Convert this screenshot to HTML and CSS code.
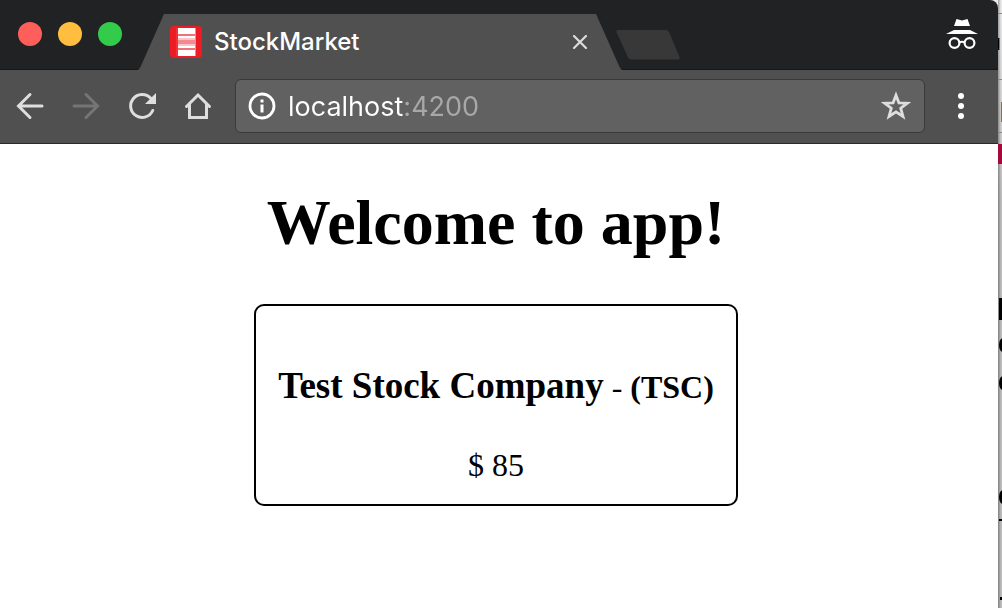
FILE: index.html
```html
<!DOCTYPE html>
<html lang="en">
<head>
<meta charset="utf-8">
<title>StockMarket</title>
<link rel="stylesheet" href="styles.css">
</head>
<body>
<div class="desktop">
  <div class="window">
    <header class="tabstrip">
      <div class="lights">
        <button class="light light-close" aria-label="Close window"></button>
        <button class="light light-min" aria-label="Minimize window"></button>
        <button class="light light-max" aria-label="Zoom window"></button>
      </div>
      <div class="tab">
        <svg class="favicon" viewBox="0 0 32 32" aria-hidden="true">
          <rect width="32" height="32" rx="4" fill="#ed1c24"/>
          <rect x="6" y="2" width="2" height="28" fill="#f0323a"/>
          <rect x="8" y="2" width="18" height="28" fill="#f4888c"/>
          <path d="M8 2h17v6H8zM8 10h17v2H8zM8 20h17v2H8zM8 24h17v6H8z" fill="#fff"/>
          <path d="M8 8h17v2H8zM8 22h17v2H8z" fill="#f37076"/>
          <path d="M8 12h17v2H8zM8 18h17v2H8z" fill="#fbc4c6"/>
        </svg>
        <span class="tab-title">StockMarket</span>
        <button class="tab-close" aria-label="Close tab">
          <svg width="14" height="14" viewBox="0 0 14 14"><path d="M1 1l12 12M13 1L1 13" stroke="#dcdcdc" stroke-width="2.2" stroke-linecap="round"/></svg>
        </button>
      </div>
      <button class="new-tab" aria-label="New tab">
        <svg width="64" height="30" viewBox="0 0 64 30"><path d="M2 0H50q2 0 3 2L63.500 27q.5 2.500-1.500 2.500H15q-2 0-3-2L.5 2Q0 0 2 0z" fill="#383838"/></svg>
      </button>
      <svg class="incognito" width="32" height="30" viewBox="0 0 32 30" role="img" aria-label="Incognito">
        <path d="M10.500 0l5.500 1.500L21.500 0 24 7H8z" fill="#fff"/>
        <path d="M8 11h16l8 4H0z" fill="#fff"/>
        <g fill="none" stroke="#fff" stroke-width="2.200"><circle cx="8.500" cy="24" r="4.900"/><circle cx="23.500" cy="24" r="4.900"/><path d="M13 23.500q3-1.500 6 0"/></g>
      </svg>
    </header>
    <nav class="toolbar">
      <button class="tool" aria-label="Back">
        <svg width="28" height="28" viewBox="0 0 28 28"><path d="M26 14H3M14 2.500L2.500 14 14 25.500" class="stroke"/></svg>
      </button>
      <button class="tool" aria-label="Forward" disabled>
        <svg width="28" height="28" viewBox="0 0 28 28"><path d="M2 14h23M14 2.500L25.500 14 14 25.500" class="stroke stroke-off"/></svg>
      </button>
      <button class="tool" aria-label="Reload">
        <svg width="28" height="28" viewBox="0 0 28 28"><path d="M24.700 18.500A11.500 11.500 0 1 1 22.500 6" class="stroke"/><path d="M28 1v11H17z" fill="#dedede"/></svg>
      </button>
      <button class="tool" aria-label="Home">
        <svg width="28" height="28" viewBox="0 0 28 28"><path d="M2.500 14.500L14 3l11.500 11.500M5.500 12.500V25.500H22.500V12.500" class="stroke"/></svg>
      </button>
      <div class="omnibox">
        <button class="omni-btn" aria-label="Site information">
          <svg width="28" height="28" viewBox="0 0 28 28"><circle cx="14" cy="14" r="12" fill="none" stroke="#fff" stroke-width="2.800"/><path d="M12.500 7.500h3v3h-3zM12.500 12.500h3v8h-3z" fill="#fff"/></svg>
        </button>
        <input class="url" type="text" value="localhost:4200" aria-label="Address" spellcheck="false">
        <button class="omni-btn" aria-label="Bookmark this page">
          <svg width="30" height="30" viewBox="0 0 30 30"><path d="M15 4.200L17.900 11.800 26.300 12.200 19.700 17.200 22 25.500 15 20.900 8 25.500 10.300 17.200 3.700 12.200 12.100 11.800z" fill="none" stroke="#dedede" stroke-width="2.800"/></svg>
        </button>
      </div>
      <button class="menu" aria-label="Menu">
        <svg width="6" height="26" viewBox="0 0 6 26"><g fill="#fff"><circle cx="3" cy="3" r="3"/><circle cx="3" cy="13" r="3"/><circle cx="3" cy="23" r="3"/></g></svg>
      </button>
    </nav>
    <main class="page">
      <h1 class="welcome">Welcome to app!</h1>
      <section class="stock">
        <div class="stock-name"><h3 class="company">Test Stock Company</h3> - <b>(TSC)</b></div>
        <div class="price">$ 85</div>
      </section>
    </main>
  </div>
  <div class="behind">
    <svg width="4" height="608" viewBox="0 0 4 608" aria-hidden="true">
      <path d="M0 13.500h4M0 79.500h4M0 132.500h4" stroke="#8b8b8b"/>
      <path d="M0 38h1v12H0z" fill="#000"/><path d="M1 38h1v12H1z" fill="#4a80b8"/>
      <path d="M3 102h1v20H3z" fill="#80715f"/>
      <path d="M0 144h4v20H0z" fill="#a5093c"/>
      <path d="M1 298h3v22H1zM1 519h3v2H1zM2 597h2v3H2z" fill="#000"/>
      <g fill="#000"><ellipse cx="5" cy="345" rx="4" ry="7"/><ellipse cx="5" cy="383" rx="4" ry="7"/><ellipse cx="5" cy="497" rx="4" ry="7"/></g>
    </svg>
  </div>
</div>
</body>
</html>
```
FILE: styles.css
```css
* { box-sizing: border-box; }

body { margin: 0; }

button {
  display: grid;
  place-items: center;
  margin: 0;
  padding: 0;
  border: 0;
  background: none;
}

.desktop {
  display: grid;
  grid-template-columns: 1fr 4px;
  min-height: 100vh;
  background: linear-gradient(#ececec, #bdbdbd 200px);
}

.window {
  display: flex;
  flex-direction: column;
  border-top-right-radius: 8px;
  overflow: hidden;
  background: #fff;
}

.behind {
  overflow: hidden;
  background: linear-gradient(90deg, #0005, #0000 3px);
}

.behind svg { display: block; }

.tabstrip {
  display: flex;
  height: 70px;
  background: #202224;
  box-shadow: inset 0 -1px #161718;
}

.lights {
  display: flex;
  gap: 16px;
  width: 138px;
  padding: 22px 0 0 18px;
}

.light {
  width: 24px;
  height: 24px;
  border-radius: 50%;
}

.light-close { background: #ff5f5a; }
.light-min { background: #ffbe3f; }
.light-max { background: #33cb4a; }

.tab {
  display: flex;
  align-items: center;
  gap: 12px;
  flex: 0 1 484px;
  margin-top: 14px;
  padding: 0 34px 0 32px;
  background: #505050;
  clip-path: polygon(26px 0, calc(100% - 26px) 0, calc(100% - 2px) 54px, 100% 100%, 0 100%, 2px 54px);
}

.favicon {
  width: 32px;
  height: 32px;
}

.tab-title {
  flex: 1;
  color: #fff;
  font: 500 24px/28px Inter, sans-serif;
}

.tab-close {
  width: 16px;
  height: 28px;
}

.new-tab {
  align-self: flex-start;
  margin: 30px auto 0 -6px;
}

.incognito {
  margin: 19px 20px 0 0;
}

.toolbar {
  display: flex;
  align-items: center;
  gap: 28px;
  height: 74px;
  padding: 0 34px 2px 16px;
  border-bottom: 1px solid #2a2a2a;
  background: #505050;
}

.stroke {
  fill: none;
  stroke: #dedede;
  stroke-width: 3;
  stroke-linecap: round;
}

.stroke-off { stroke: #757575; }

.omnibox {
  display: flex;
  align-items: center;
  flex: 1;
  gap: 12px;
  height: 54px;
  margin: 0 5px 0 -5px;
  padding: 0 13px 0 12px;
  border: 1px solid #3a3a3a;
  border-radius: 6px;
  background: #616161;
}

.url {
  flex: 1;
  min-width: 0;
  padding: 2px 0 0;
  border: 0;
  outline: 0;
  background: linear-gradient(90deg, #fff 115px, #a8a8a8 115px);
  background-clip: text;
  -webkit-text-fill-color: transparent;
  font: 400 27px/36px Inter, sans-serif;
}

.page {
  flex: 1;
  padding: 42px 22px 0 16px;
  color: #000;
  font: 32px/36px "Liberation Serif", serif;
  text-align: center;
}

.welcome {
  margin: 0 0 44px;
  font-size: 64px;
  line-height: 74px;
}

.stock {
  width: fit-content;
  margin: 0 auto;
  padding: 59px 22px 21px;
  border: 2px solid #000;
  border-radius: 10px;
}

.stock-name { line-height: 42px; }

.company {
  display: inline;
  margin: 0;
  font-size: 37px;
}

.price { margin-top: 39px; }
```
